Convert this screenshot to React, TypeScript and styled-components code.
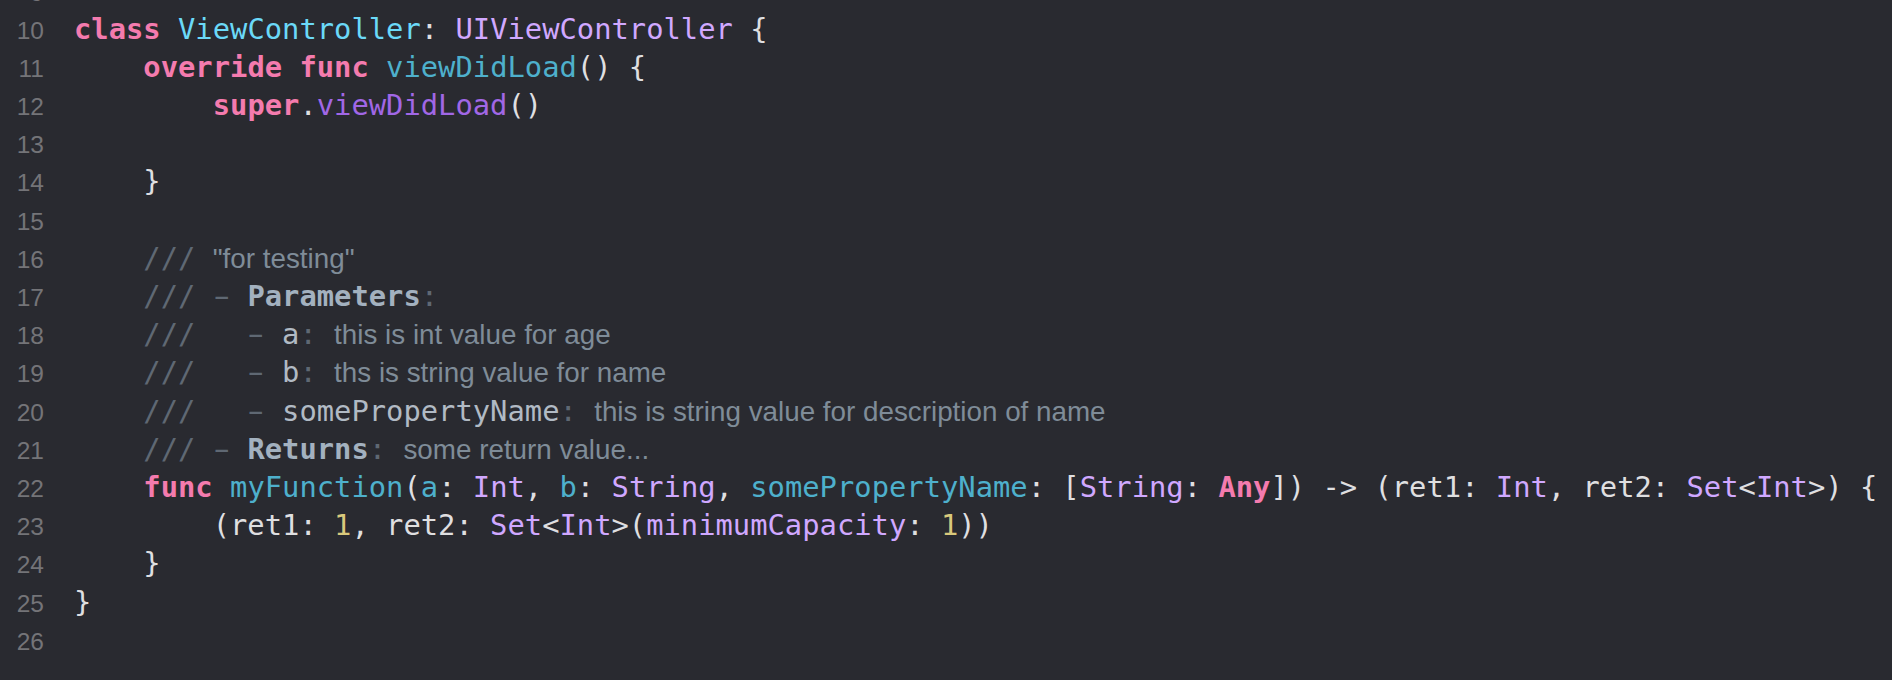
import React from "react";
import styled, { createGlobalStyle, css } from "styled-components";

type Kind =
  | "plain"
  | "kw"
  | "typeDecl"
  | "type"
  | "decl"
  | "method"
  | "num"
  | "docSlash"
  | "docText"
  | "docKey"
  | "docParam"
  | "docPunct"
  | "docDash";

type Token = [Kind, string];

const MONO = `"DejaVu Sans Mono", "Liberation Mono", monospace`;
const SANS = `"Liberation Sans", Arial, sans-serif`;

const GlobalStyle = createGlobalStyle`
  html, body {
    margin: 0;
    padding: 0;
    background: #292a30;
    overflow: hidden;
  }
`;

const Editor = styled.div`
  width: 1892px;
  height: 680px;
  overflow: hidden;
  background: #292a30;
`;

const LineList = styled.div`
  display: flex;
  flex-direction: column;
  margin-top: -28.5px;
`;

const Line = styled.div`
  display: flex;
  align-items: baseline;
  height: 38.2px;
`;

const Gutter = styled.span`
  flex: 0 0 44px;
  text-align: right;
  font-family: ${SANS};
  font-size: 24.5px;
  line-height: 38.2px;
  color: #747478;
`;

const Code = styled.span`
  padding-left: 30px;
  font-family: ${MONO};
  font-size: 28.8px;
  line-height: 38.2px;
  white-space: pre;
  color: #dfdfe0;
`;

const kindStyles: Record<Kind, ReturnType<typeof css>> = {
  plain: css`
    color: #dfdfe0;
  `,
  kw: css`
    color: #f47bae;
    font-weight: bold;
  `,
  typeDecl: css`
    color: #6bd9f8;
  `,
  type: css`
    color: #d0a8ff;
  `,
  decl: css`
    color: #4eb0cc;
  `,
  method: css`
    color: #a167e6;
  `,
  num: css`
    color: #d9c97c;
  `,
  docSlash: css`
    color: #5f6873;
  `,
  docText: css`
    color: #7f8c98;
    font-family: ${SANS};
    font-size: 27.8px;
  `,
  docKey: css`
    color: #a3b1bf;
    font-weight: bold;
  `,
  docParam: css`
    color: #b1bac4;
  `,
  docPunct: css`
    color: #5f6873;
  `,
  docDash: css`
    color: #5f6873;
    display: inline-block;
    transform: scaleX(1.7);
  `,
};

const Tok = styled.span<{ $kind: Kind }>`
  ${(p) => kindStyles[p.$kind]}
`;

const lines: { n: number; tokens: Token[] }[] = [
  { n: 9, tokens: [] },
  {
    n: 10,
    tokens: [
      ["kw", "class"],
      ["plain", " "],
      ["typeDecl", "ViewController"],
      ["plain", ": "],
      ["type", "UIViewController"],
      ["plain", " {"],
    ],
  },
  {
    n: 11,
    tokens: [
      ["plain", "    "],
      ["kw", "override"],
      ["plain", " "],
      ["kw", "func"],
      ["plain", " "],
      ["decl", "viewDidLoad"],
      ["plain", "() {"],
    ],
  },
  {
    n: 12,
    tokens: [
      ["plain", "        "],
      ["kw", "super"],
      ["plain", "."],
      ["method", "viewDidLoad"],
      ["plain", "()"],
    ],
  },
  { n: 13, tokens: [] },
  { n: 14, tokens: [["plain", "    }"]] },
  { n: 15, tokens: [] },
  {
    n: 16,
    tokens: [
      ["plain", "    "],
      ["docSlash", "///"],
      ["plain", " "],
      ["docText", "\"for testing\""],
    ],
  },
  {
    n: 17,
    tokens: [
      ["plain", "    "],
      ["docSlash", "///"],
      ["plain", " "],
      ["docDash", "-"],
      ["plain", " "],
      ["docKey", "Parameters"],
      ["docPunct", ":"],
    ],
  },
  {
    n: 18,
    tokens: [
      ["plain", "    "],
      ["docSlash", "///"],
      ["plain", "   "],
      ["docDash", "-"],
      ["plain", " "],
      ["docParam", "a"],
      ["docPunct", ":"],
      ["plain", " "],
      ["docText", "this is int value for age"],
    ],
  },
  {
    n: 19,
    tokens: [
      ["plain", "    "],
      ["docSlash", "///"],
      ["plain", "   "],
      ["docDash", "-"],
      ["plain", " "],
      ["docParam", "b"],
      ["docPunct", ":"],
      ["plain", " "],
      ["docText", "ths is string value for name"],
    ],
  },
  {
    n: 20,
    tokens: [
      ["plain", "    "],
      ["docSlash", "///"],
      ["plain", "   "],
      ["docDash", "-"],
      ["plain", " "],
      ["docParam", "somePropertyName"],
      ["docPunct", ":"],
      ["plain", " "],
      ["docText", "this is string value for description of name"],
    ],
  },
  {
    n: 21,
    tokens: [
      ["plain", "    "],
      ["docSlash", "///"],
      ["plain", " "],
      ["docDash", "-"],
      ["plain", " "],
      ["docKey", "Returns"],
      ["docPunct", ":"],
      ["plain", " "],
      ["docText", "some return value..."],
    ],
  },
  {
    n: 22,
    tokens: [
      ["plain", "    "],
      ["kw", "func"],
      ["plain", " "],
      ["decl", "myFunction"],
      ["plain", "("],
      ["decl", "a"],
      ["plain", ": "],
      ["type", "Int"],
      ["plain", ", "],
      ["decl", "b"],
      ["plain", ": "],
      ["type", "String"],
      ["plain", ", "],
      ["decl", "somePropertyName"],
      ["plain", ": ["],
      ["type", "String"],
      ["plain", ": "],
      ["kw", "Any"],
      ["plain", "]) -> (ret1: "],
      ["type", "Int"],
      ["plain", ", ret2: "],
      ["type", "Set"],
      ["plain", "<"],
      ["type", "Int"],
      ["plain", ">) {"],
    ],
  },
  {
    n: 23,
    tokens: [
      ["plain", "        (ret1: "],
      ["num", "1"],
      ["plain", ", ret2: "],
      ["type", "Set"],
      ["plain", "<"],
      ["type", "Int"],
      ["plain", ">("],
      ["type", "minimumCapacity"],
      ["plain", ": "],
      ["num", "1"],
      ["plain", "))"],
    ],
  },
  { n: 24, tokens: [["plain", "    }"]] },
  { n: 25, tokens: [["plain", "}"]] },
  { n: 26, tokens: [] },
  { n: 27, tokens: [] },
];

export default function App() {
  return (
    <>
      <GlobalStyle />
      <Editor>
        <LineList>
          {lines.map((line) => (
            <Line key={line.n}>
              <Gutter>{line.n <= 26 ? line.n : ""}</Gutter>
              <Code>
                {line.tokens.length === 0
                  ? " "
                  : line.tokens.map(([kind, text], i) => (
                      <Tok key={i} $kind={kind}>
                        {text}
                      </Tok>
                    ))}
              </Code>
            </Line>
          ))}
        </LineList>
      </Editor>
    </>
  );
}
